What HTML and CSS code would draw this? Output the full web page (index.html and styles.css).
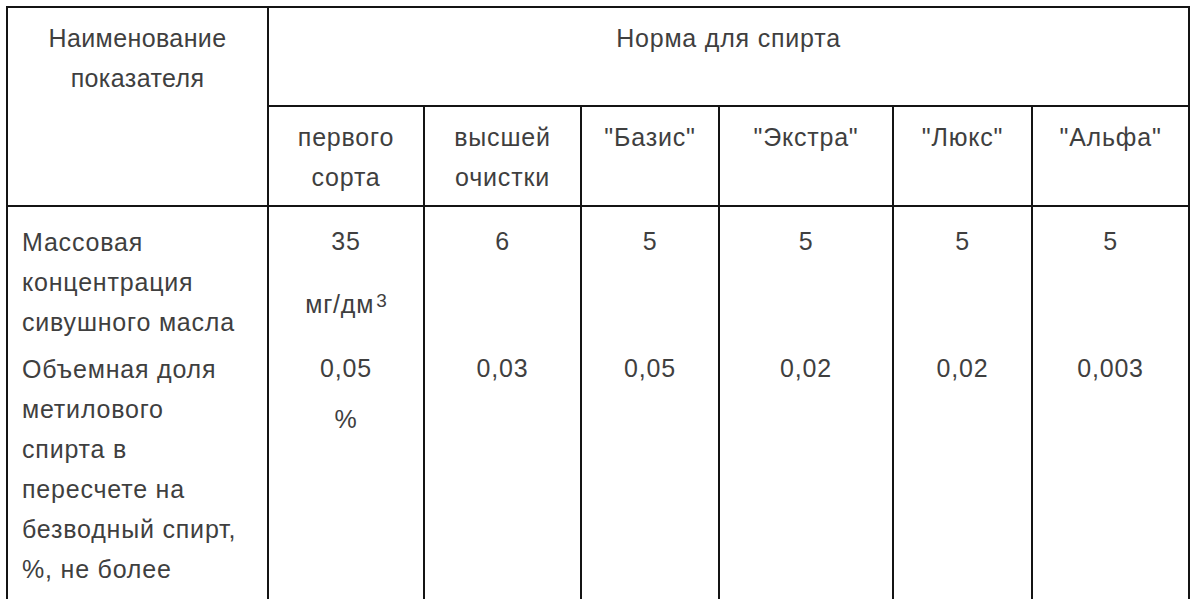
FILE: index.html
```html
<!DOCTYPE html>
<html lang="ru">
<head>
<meta charset="utf-8">
<title>Норма для спирта</title>
<link rel="stylesheet" href="styles.css">
</head>
<body>
<div class="page">
  <table class="norms">
    <colgroup>
      <col class="c-name">
      <col class="c-v1">
      <col class="c-v2">
      <col class="c-v3">
      <col class="c-v4">
      <col class="c-v5">
      <col class="c-v6">
    </colgroup>
    <thead>
      <tr class="h1">
        <th rowspan="2" class="hname">Наименование<br>показателя</th>
        <th colspan="6" class="hgroup">Норма для спирта</th>
      </tr>
      <tr class="h2">
        <th>первого<br>сорта</th>
        <th>высшей<br>очистки</th>
        <th>"Базис"</th>
        <th>"Экстра"</th>
        <th>"Люкс"</th>
        <th>"Альфа"</th>
      </tr>
    </thead>
    <tbody>
      <tr class="ra">
        <td class="name">Массовая<br>концентрация<br>сивушного масла</td>
        <td class="val">35<br>мг/дм<sup>3</sup></td>
        <td class="val">6</td>
        <td class="val">5</td>
        <td class="val">5</td>
        <td class="val">5</td>
        <td class="val">5</td>
      </tr>
      <tr class="rb">
        <td class="name">Объемная доля<br>метилового<br>спирта в<br>пересчете на<br>безводный спирт,<br>%, не более</td>
        <td class="val">0,05<br>%</td>
        <td class="val">0,03</td>
        <td class="val">0,05</td>
        <td class="val">0,02</td>
        <td class="val">0,02</td>
        <td class="val">0,003</td>
      </tr>
    </tbody>
  </table>
</div>
</body>
</html>
```

FILE: styles.css
```css
html, body {
  margin: 0;
  padding: 0;
  background: #ffffff;
}

.page {
  padding: 6px 0 0 6px;
}

.norms {
  border-collapse: collapse;
  table-layout: fixed;
  width: 1184px;
  font-family: "Liberation Sans", Arial, sans-serif;
  font-size: 25px;
  letter-spacing: 0.8px;
  color: #3f3f3f;
}

.c-name { width: 261px; }
.c-v1 { width: 156px; }
.c-v2 { width: 157px; }
.c-v3 { width: 138px; }
.c-v4 { width: 174px; }
.c-v5 { width: 139px; }
.c-v6 { width: 157px; }

.norms th,
.norms td {
  border: 2px solid #141414;
  vertical-align: top;
  text-align: center;
  font-weight: normal;
}

.norms th {
  line-height: 40px;
  padding: 10px 4px 8px;
}

.h1 .hgroup {
  height: 79px;
}

.hname {
  letter-spacing: 0.4px;
}

.norms td {
  padding: 0 4px;
}

.ra td {
  border-bottom: none;
}

.rb td {
  border-top: none;
}

.norms td.name {
  text-align: left;
  line-height: 40px;
  padding-left: 14px;
  padding-right: 4px;
}

.norms td.val {
  line-height: 51px;
}

.ra td.name {
  padding-top: 15px;
}

.ra td.val {
  padding-top: 9px;
}

.rb td.name {
  padding-top: 7px;
  padding-bottom: 30px;
}

.rb td.val {
  padding-top: 1px;
}

.val sup {
  display: inline-block;
  font-size: 19px;
  line-height: 19px;
  letter-spacing: 0;
  vertical-align: 6px;
  padding-top: 24px;
  margin-left: 2px;
}
```
